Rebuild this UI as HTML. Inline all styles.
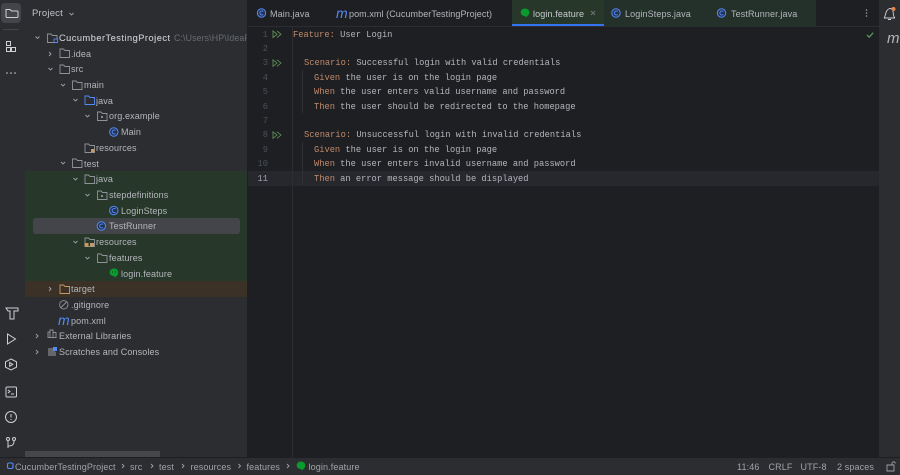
<!DOCTYPE html>
<html><head><meta charset="utf-8">
<style>
html,body{margin:0;padding:0;background:#1e1f22}
#app{position:relative;width:900px;height:475px;overflow:hidden;background:#1e1f22;font-family:"Liberation Sans",sans-serif;font-size:9px;color:#bcbec4;filter:blur(.3px)}
.a{position:absolute}
.t{position:absolute;white-space:nowrap;line-height:12px;font-size:9px;color:#b4b6bc;letter-spacing:.12px}
.c{position:absolute;white-space:nowrap;line-height:12px;font-family:"Liberation Mono",monospace;font-size:8.73px;color:#b4b6bc}
.c b{font-weight:normal;color:#c08a6b}
.n{position:absolute;width:20px;left:248px;text-align:right;line-height:12px;font-family:"Liberation Mono",monospace;font-size:8.73px;color:#4b5059}
.m{position:absolute;font-family:"Liberation Sans",sans-serif;font-style:italic;font-size:14px;line-height:14px;color:#548af7}
svg{position:absolute;overflow:visible}
</style></head><body><div id="app">

<!-- panels -->
<div class="a" style="left:0;top:0;width:25px;height:458px;background:#2b2d30"></div>
<div class="a" style="left:25px;top:0;width:222px;height:458px;background:#2b2d30"></div>
<div class="a" style="left:247px;top:0;width:1px;height:458px;background:#1e1f22"></div>
<div class="a" style="left:248px;top:0;width:632px;height:26px;background:#1e1f22"></div>
<div class="a" style="left:248px;top:26px;width:632px;height:1px;background:#2b2d30"></div>
<div class="a" style="left:879px;top:0;width:21px;height:458px;background:#2b2d30"></div>
<div class="a" style="left:0;top:458px;width:900px;height:17px;background:#2b2d30"></div>
<div class="a" style="left:0;top:457px;width:900px;height:1px;background:#1e1f22"></div>

<!-- rows bg -->
<div class="a" style="left:25px;top:171px;width:222px;height:110px;background:#27382a"></div>
<div class="a" style="left:25px;top:281px;width:222px;height:16px;background:#3c3127"></div>
<div class="a" style="left:33px;top:218px;width:207px;height:16px;background:#43454a;border-radius:3px"></div>
<div class="a" style="left:25px;top:451px;width:135px;height:6px;background:#45474b"></div>

<!-- left toolbar -->
<div class="a" style="left:1px;top:3px;width:20px;height:20px;background:#43454a;border-radius:4px"></div>
<svg style="left:0;top:0" width="25" height="160" fill="none" stroke="#ced0d6" stroke-width="1">
<path d="M6 9.500h4l1.500 1.500h5.500a1 1 0 0 1 1 1v4.500a1 1 0 0 1-1 1H7a1 1 0 0 1-1-1z"/>
<path d="M3 29.500h16" stroke="#43454a"/>
<path d="M6.500 41.500h4v4h-4zM6.500 47.500h4v4h-4zM11.500 47.500h4v4h-4z"/>
<circle cx="7" cy="73" r=".8" fill="#ced0d6" stroke="none"/><circle cx="11" cy="73" r=".8" fill="#ced0d6" stroke="none"/><circle cx="15" cy="73" r=".8" fill="#ced0d6" stroke="none"/>
</svg>
<svg style="left:0;top:295px" width="25" height="160" fill="none" stroke="#ced0d6" stroke-width="1">
<path d="M6 13h12v3h-4v8h-4v-8H8z"/>
<path d="M7.500 39v10l8-5z"/>
<path d="M11 64l5.500 2.800v5.400L11 75l-5.500-2.800v-5.400z"/><path d="M9.700 67.500v3.800l3-1.900z"/>
<rect x="6" y="92" width="10.500" height="10" rx="1"/><path d="M8 95l2 1.500L8 98M11 99h3"/>
<circle cx="11" cy="122" r="5.500"/><path d="M11 119v3.500M11 124v1"/>
<circle cx="8" cy="144" r="1.500"/><circle cx="14" cy="144" r="1.500"/><path d="M8 146v7M8 151c4 0 6-1 6-5"/>
</svg>

<!-- tree arrows -->
<svg style="left:0;top:0" width="247" height="360" fill="none" stroke="#9da0a8" stroke-width=".9">
<path d="M35.500 36.500l2 2 2-2"/>
<path d="M49 52l2 2-2 2"/>
<path d="M48.500 68l2 2 2-2"/>
<path d="M61 84l2 2 2-2"/>
<path d="M73.500 99l2 2 2-2"/>
<path d="M85.500 115l2 2 2-2"/>
<path d="M61 162l2 2 2-2"/>
<path d="M73.500 178l2 2 2-2"/>
<path d="M85.500 194l2 2 2-2"/>
<path d="M73.500 241l2 2 2-2"/>
<path d="M85.500 257l2 2 2-2"/>
<path d="M49 287l2 2-2 2"/>
<path d="M36 334l2 2-2 2"/>
<path d="M36 350l2 2-2 2"/>
</svg>

<!-- folder icons -->
<svg style="left:0;top:0" width="247" height="360" fill="none" stroke="#8f9299" stroke-width=".9">
<path d="M47.500 34h3.500l1.500 1.500h4.500v7h-9.500z"/>
<rect x="54" y="39" width="3.500" height="3.500" stroke="#548af7" fill="#2b2d30"/>
<path d="M60 49h3.500l1.500 1.500h4.500v7H60z"/>
<path d="M60 65h3.500l1.500 1.500h4.500v7H60z"/>
<path d="M72.500 81H76l1.500 1.500H82v7h-9.500z"/>
<path d="M85 96h3.500l1.500 1.500h4.500v7H85z" stroke="#548af7"/>
<path d="M97.500 112h3.500l1.500 1.500h4.500v7h-9.500z"/><circle cx="102" cy="117" r=".7"/>
<path d="M85 144h3.500l1.500 1.500h4.500v7H85z"/><rect x="91" y="149" width="3.500" height="3" fill="#c79a64" stroke="none"/>
<path d="M72.500 159H76l1.500 1.500H82v7h-9.500z"/>
<path d="M85 175h3.500l1.500 1.500h4.500v7H85z"/>
<path d="M97.500 191h3.500l1.500 1.500h4.500v7h-9.500z"/><circle cx="102" cy="196" r=".7"/>
<path d="M85 238h3.500l1.500 1.500h4.500v7H85z"/><rect x="84.500" y="243" width="4" height="3.500" fill="#c79a64" stroke="none"/><rect x="90" y="243" width="4" height="3.500" fill="#c79a64" stroke="none"/>
<path d="M97.500 254h3.500l1.500 1.500h4.500v7h-9.500z"/>
<path d="M60 285h3.500l1.500 1.500h4.500v7H60z" stroke="#c79a64"/>
<circle cx="63.800" cy="304.800" r="4.200"/><path d="M61 307.500l5.500-5.500"/>
<path d="M48 337v-5h2v5M50 337v-7h3v7M53 337v-4.500h3v4.500M47.500 337.500h9"/>
</svg>
<svg style="left:0;top:0" width="247" height="360">
<!-- Scratches -->
<path d="M48 349h6M48 351h7M48 353h8M48 355h8" stroke="#9da0a8" stroke-width="1"/>
<rect x="53" y="347" width="4" height="4" fill="#548af7"/>
<!-- class icons -->
<g fill="none" stroke="#548af7" stroke-width="1">
<circle cx="113.800" cy="132" r="4.200" fill="#25324d"/><path d="M115.500 130.500a2 2 0 1 0 0 3"/>
<circle cx="113.800" cy="210.500" r="4.200" fill="#25324d"/><path d="M115.500 209a2 2 0 1 0 0 3"/>
<circle cx="101.300" cy="226" r="4.200" fill="#25324d"/><path d="M103 224.500a2 2 0 1 0 0 3"/>
</g>
<path d="M114 268.500c2.600 0 4.300 1.800 4.300 4.100 0 2.200-2 3.800-3.800 5v-1.500c-2.700 0-4.800-1.400-4.800-3.600 0-2.300 1.800-4 4.300-4z" fill="#0b9a2e"/>
<circle cx="112.500" cy="272" r=".6" fill="#27382a"/><circle cx="115.500" cy="272" r=".6" fill="#27382a"/>
</svg>
<div class="m" style="left:58px;top:313px">m</div>

<!-- tree text -->
<div class="t" style="left:32px;top:7.500px;font-size:9.500px;letter-spacing:.2px;color:#c0c2c8">Project</div>
<svg style="left:0;top:0" width="90" height="20" fill="none" stroke="#9da0a8" stroke-width=".9"><path d="M69.500 13l2 2 2-2"/></svg>
<div class="t" style="left:59px;top:32px;font-size:9.200px;color:#c8cad0;letter-spacing:.52px;-webkit-text-stroke:.12px #c8cad0">CucumberTestingProject</div>
<div class="t" style="left:174px;top:32px;width:73px;overflow:hidden;font-size:8.800px;color:#686c73">C:\Users\HP\IdeaProjects</div>
<div class="t" style="left:71px;top:47.500px">.idea</div>
<div class="t" style="left:71px;top:63px">src</div>
<div class="t" style="left:84px;top:79px">main</div>
<div class="t" style="left:96px;top:94.500px">java</div>
<div class="t" style="left:109px;top:110px">org.example</div>
<div class="t" style="left:121px;top:126px">Main</div>
<div class="t" style="left:96px;top:142px">resources</div>
<div class="t" style="left:84px;top:157.500px">test</div>
<div class="t" style="left:96px;top:173px">java</div>
<div class="t" style="left:109px;top:189px">stepdefinitions</div>
<div class="t" style="left:121px;top:204.500px">LoginSteps</div>
<div class="t" style="left:109px;top:220px">TestRunner</div>
<div class="t" style="left:96px;top:236px">resources</div>
<div class="t" style="left:109px;top:252px">features</div>
<div class="t" style="left:121px;top:267.500px">login.feature</div>
<div class="t" style="left:71px;top:283px">target</div>
<div class="t" style="left:71px;top:299px">.gitignore</div>
<div class="t" style="left:71px;top:314.500px">pom.xml</div>
<div class="t" style="left:59px;top:330px">External Libraries</div>
<div class="t" style="left:59px;top:346px">Scratches and Consoles</div>

<!-- tabs -->
<div class="a" style="left:512px;top:0;width:92px;height:24px;background:#27382a"></div>
<div class="a" style="left:512px;top:24px;width:92px;height:2px;background:#3574f0"></div>
<div class="a" style="left:604px;top:0;width:212px;height:26px;background:#24312a"></div>
<svg style="left:0;top:0" width="900" height="30">
<g fill="none" stroke="#548af7" stroke-width="1">
<circle cx="261.500" cy="13" r="4.200" fill="#25324d"/><path d="M263.200 11.500a2 2 0 1 0 0 3"/>
<circle cx="616" cy="13" r="4.200" fill="#25324d"/><path d="M617.700 11.500a2 2 0 1 0 0 3"/>
<circle cx="721.500" cy="13" r="4.200" fill="#25324d"/><path d="M723.200 11.500a2 2 0 1 0 0 3"/>
</g>
<path d="M525 8.500c2.600 0 4.300 1.800 4.300 4.100 0 2.200-2 3.800-3.800 5v-1.500c-2.700 0-4.800-1.400-4.800-3.600 0-2.300 1.800-4 4.300-4z" fill="#0b9a2e"/>
<path d="M591 11l4 4M595 11l-4 4" stroke="#6f737a" stroke-width=".9"/>
<circle cx="866.500" cy="10" r=".8" fill="#9da0a8"/><circle cx="866.500" cy="13" r=".8" fill="#9da0a8"/><circle cx="866.500" cy="16" r=".8" fill="#9da0a8"/>
</svg>
<div class="m" style="left:336px;top:6px">m</div>
<div class="t" style="left:270px;top:8px">Main.java</div>
<div class="t" style="left:349px;top:8px;letter-spacing:.08px">pom.xml (CucumberTestingProject)</div>
<div class="t" style="left:533px;top:8px;color:#c8cad0">login.feature</div>
<div class="t" style="left:625px;top:8px">LoginSteps.java</div>
<div class="t" style="left:731px;top:8px">TestRunner.java</div>

<!-- editor -->
<div class="a" style="left:248px;top:171px;width:631px;height:15px;background:#26282e"></div>
<div class="a" style="left:291.500px;top:27px;width:1px;height:431px;background:#2b2d30"></div>
<div class="a" style="left:302px;top:70px;width:1px;height:43px;background:#2d3034"></div>
<div class="a" style="left:302px;top:142px;width:1px;height:43px;background:#2d3034"></div>

<div class="n" style="top:28.500px">1</div>
<div class="n" style="top:43px">2</div>
<div class="n" style="top:57px">3</div>
<div class="n" style="top:71.500px">4</div>
<div class="n" style="top:86px">5</div>
<div class="n" style="top:100.500px">6</div>
<div class="n" style="top:115px">7</div>
<div class="n" style="top:129px">8</div>
<div class="n" style="top:143.500px">9</div>
<div class="n" style="top:158px">10</div>
<div class="n" style="top:172.500px;color:#a1a3ab">11</div>

<svg style="left:0;top:0" width="300" height="150" fill="none" stroke="#5f8c57" stroke-width=".9">
<path d="M273 31v6.500l4-3.250zM277 31l4 3.250-4 3.250"/>
<path d="M273 59.800v6.500l4-3.250zM277 59.800l4 3.250-4 3.250"/>
<path d="M273 131.800v6.500l4-3.250zM277 131.800l4 3.250-4 3.250"/>
</svg>
<svg style="left:860px;top:28px" width="20" height="14" fill="none" stroke="#57965c" stroke-width="1.300"><path d="M7 7l2.200 2.200 4-4.500"/></svg>

<div class="c" style="left:293px;top:28.500px"><b>Feature:</b> User Login</div>
<div class="c" style="left:304px;top:57px"><b>Scenario:</b> Successful login with valid credentials</div>
<div class="c" style="left:314px;top:71.500px"><b>Given</b> the user is on the login page</div>
<div class="c" style="left:314px;top:86px"><b>When</b> the user enters valid username and password</div>
<div class="c" style="left:314px;top:100.500px"><b>Then</b> the user should be redirected to the homepage</div>
<div class="c" style="left:304px;top:129px"><b>Scenario:</b> Unsuccessful login with invalid credentials</div>
<div class="c" style="left:314px;top:143.500px"><b>Given</b> the user is on the login page</div>
<div class="c" style="left:314px;top:158px"><b>When</b> the user enters invalid username and password</div>
<div class="c" style="left:314px;top:172.500px"><b>Then</b> an error message should be displayed</div>

<!-- right strip -->
<svg style="left:879px;top:0" width="21" height="50" fill="none" stroke="#ced0d6" stroke-width=".9">
<path d="M5 18c2-1.500 1-8 5.500-9.500 1 0 2 0 3 1M14 11c.5 3 0 5.500 2 7M5 18h11M9 19.500h3"/>
<circle cx="14.500" cy="9" r="2" fill="#e08855" stroke="none"/>
</svg>
<div class="a" style="left:887px;top:31px;font-family:'Liberation Sans',sans-serif;font-style:italic;font-size:15px;line-height:16px;color:#b4b6bc">m</div>

<!-- status bar -->
<svg style="left:0;top:458px" width="900" height="17" fill="none" stroke="#9da0a8" stroke-width=".9">
<rect x="7.500" y="5" width="5.500" height="5.500" rx="1.500" stroke="#548af7" stroke-width="1.100"/>
<path d="M122 6l2 2-2 2M151 6l2 2-2 2M182 6l2 2-2 2M238.500 6l2 2-2 2M287 6l2 2-2 2"/>
<path d="M887 7h7v6h-7zM892 7V5.500a1.700 1.700 0 0 1 3.400 0"/>
<path d="M301 3.500c2.600 0 4.300 1.800 4.300 4.100 0 2.200-2 3.800-3.800 5v-1.500c-2.700 0-4.800-1.400-4.800-3.600 0-2.300 1.800-4 4.300-4z" fill="#0b9a2e" stroke="none"/>
</svg>
<div class="t" style="left:15px;top:461px;color:#a0a3aa">CucumberTestingProject</div>
<div class="t" style="left:130px;top:461px;color:#a0a3aa">src</div>
<div class="t" style="left:159px;top:461px;color:#a0a3aa">test</div>
<div class="t" style="left:190.500px;top:461px;color:#a0a3aa">resources</div>
<div class="t" style="left:246.500px;top:461px;color:#a0a3aa">features</div>
<div class="t" style="left:308.500px;top:461px;color:#a0a3aa">login.feature</div>
<div class="t" style="left:737px;top:461px;color:#a0a3aa">11:46</div>
<div class="t" style="left:768.500px;top:461px;color:#a0a3aa">CRLF</div>
<div class="t" style="left:800.500px;top:461px;color:#a0a3aa">UTF-8</div>
<div class="t" style="left:837px;top:461px;color:#a0a3aa">2 spaces</div>

</div></body></html>
